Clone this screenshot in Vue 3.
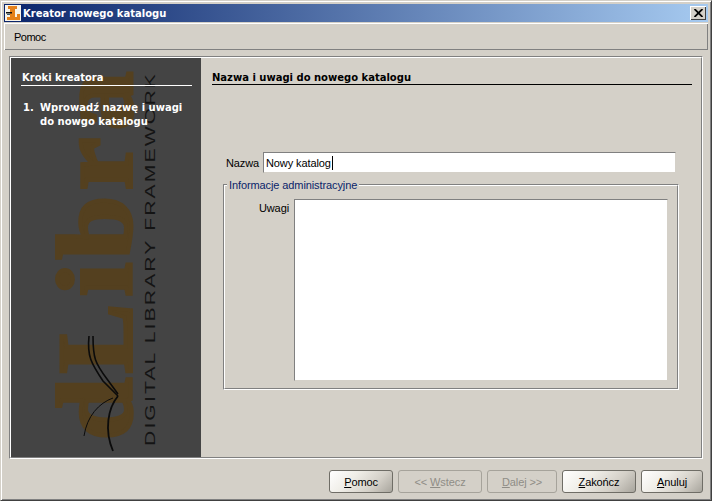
<script setup>
const buttons = [
  { pre: '', u: 'P', post: 'omoc', w: 64 },
  { pre: '<< ', u: 'W', post: 'stecz', w: 84, off: true },
  { pre: '', u: 'D', post: 'alej >>', w: 70, off: true },
  { pre: '', u: 'Z', post: 'akończ', w: 74 },
  { pre: '', u: 'A', post: 'nuluj', w: 62 },
]
const logoLetters = [
  { ch: 'd', y: 382, len: 62 },
  { ch: 'L', y: 315, len: 69 },
  { ch: 'i', y: 238, len: 33 },
  { ch: 'b', y: 201, len: 63 },
  { ch: 'r', y: 132, len: 52 },
  { ch: 'a', y: 72, len: 58 },
]
</script>

<template>
  <div class="win">
    <div class="title">
      <svg class="appicon" width="16" height="16" viewBox="0 0 16 16">
        <rect width="16" height="16" fill="#f8f4ea" />
        <path d="M3 1h9v3h-2v8h2V9h3v6H2v-3h3V4H3z" fill="#e5811a" />
        <path d="M1 7h6v1.5H1z" fill="#111" />
        <path d="M2 9h3v1H2z" fill="#3a5a70" />
      </svg>
      <span class="title-text">Kreator nowego katalogu</span>
      <span class="close">
        <svg width="9" height="8" viewBox="0 0 9 8"><path d="M0.5 0L8.5 8M8.5 0L0.5 8" stroke="#000" stroke-width="1.8" fill="none" /></svg>
      </span>
    </div>
    <div class="menubar"><span>Pomoc</span></div>
    <div class="etch-out">
      <div class="etch-in">
        <aside class="side">
          <svg class="logo" width="190" height="400" viewBox="0 0 190 400">
            <text
              v-for="l in logoLetters"
              :key="l.ch"
              :transform="`translate(120 ${l.y}) rotate(-90)`"
              class="logo-word"
              :textLength="l.len"
              lengthAdjust="spacingAndGlyphs"
            >{{ l.ch }}</text>
            <text transform="translate(144 388) rotate(-90)" class="logo-tag" textLength="374" lengthAdjust="spacingAndGlyphs">DIGITAL LIBRARY FRAMEWORK</text>
            <g fill="none" stroke="#0b0b0b">
              <path d="M78 278C76 298 80 305 92 323L107 338" stroke-width="1.6" />
              <path d="M82 278C82 300 84 305 96 321L107 336" stroke-width="1.6" />
              <path d="M107 338C97 350 93 372 102 393" stroke-width="1.8" />
              <path d="M102 340C88 345 76 358 73 378" stroke-width="1" />
            </g>
          </svg>
          <div class="side-head">Kroki kreatora</div>
          <div class="step">
            <span class="num">1.</span>
            <span>Wprowadź nazwę i uwagi<br />do nowgo katalogu</span>
          </div>
        </aside>
        <main class="content">
          <h2 class="heading">Nazwa i uwagi do nowego katalogu</h2>
          <div class="name-row">
            <span class="label">Nazwa</span>
            <div class="field name">Nowy katalog<i class="caret"></i></div>
          </div>
          <div class="group-out">
            <div class="group-in">
              <span class="legend">Informacje administracyjne</span>
              <div class="notes-row">
                <span class="label">Uwagi</span>
                <div class="field notes"></div>
              </div>
            </div>
          </div>
        </main>
      </div>
    </div>
    <div class="actions">
      <div v-for="b in buttons" :key="b.u" class="btn" :class="{ off: b.off }" :style="{ width: b.w + 'px' }">
        <span>{{ b.pre }}<u>{{ b.u }}</u>{{ b.post }}</span>
      </div>
    </div>
  </div>
</template>

<style>
html, body { margin: 0; padding: 0; background: #d4d0c8; }
</style>

<style scoped>
.win {
  box-sizing: border-box;
  width: 712px;
  height: 501px;
  overflow: hidden;
  background: #d4d0c8;
  border: 1px solid;
  border-color: #d4d0c8 #404040 #404040 #d4d0c8;
  box-shadow: inset 1px 1px 0 #fff, inset -1px -1px 0 #808080;
  padding: 3px;
  display: flex;
  flex-direction: column;
  font: 11px "Liberation Sans", Arial, sans-serif;
  letter-spacing: -0.1px;
  color: #000;
}
.title {
  height: 18px;
  flex: none;
  display: flex;
  align-items: center;
  gap: 2px;
  padding: 0 2px 0 1px;
  background: linear-gradient(90deg, #0a246a, #a6caf0);
}
.appicon { flex: none; }
.title-text {
  flex: 1;
  color: #fff;
  font: bold 10px "DejaVu Sans", sans-serif;
  letter-spacing: 0;
  white-space: nowrap;
}
.close {
  box-sizing: border-box;
  width: 16px;
  height: 14px;
  display: flex;
  align-items: center;
  justify-content: center;
  background: #d4d0c8;
  box-shadow: inset 1px 1px 0 #fff, inset -1px -1px 0 #404040;
}
.menubar {
  box-sizing: border-box;
  flex: none;
  height: 27px;
  margin-top: 1px;
  padding: 0 10px;
  display: flex;
  align-items: center;
  letter-spacing: -0.5px;
  box-shadow: inset 1px 1px 0 #fff, inset -1px -1px 0 #808080;
}
.etch-out {
  box-sizing: border-box;
  flex: none;
  height: 403px;
  margin: 6px 5px 0 5px;
  border: 1px solid;
  border-color: #808080 #fff #fff #808080;
}
.etch-in {
  box-sizing: border-box;
  height: 100%;
  border: 1px solid;
  border-color: #fff #808080 #808080 #fff;
  display: flex;
}
.side {
  position: relative;
  box-sizing: border-box;
  flex: none;
  width: 190px;
  background: #444444;
  color: #fff;
  padding: 13px 9px 0 10px;
  font: bold 10px "DejaVu Sans", sans-serif;
  letter-spacing: 0;
  overflow: hidden;
}
.logo { position: absolute; left: 0; top: 0; }
.logo-word {
  font: bold 106px "Liberation Serif", serif;
  fill: #54401f;
  stroke: #54401f;
  stroke-width: 4px;
}
.logo-tag {
  font: 15px "Liberation Sans", sans-serif;
  letter-spacing: 1.5px;
  fill: #141414;
}
.side-head, .step { position: relative; }
.side-head {
  height: 14px;
  line-height: 13px;
  padding-left: 1px;
  border-bottom: 1px solid #fff;
}
.step {
  display: flex;
  margin-top: 15px;
  padding-left: 2px;
  line-height: 14px;
}
.num { flex: none; width: 17px; }
.content {
  flex: 1;
  min-width: 0;
  display: flex;
  flex-direction: column;
  padding: 13px 9px 0 11px;
}
.heading {
  box-sizing: border-box;
  margin: 0;
  height: 14px;
  padding-left: 0;
  font: bold 10px/13px "DejaVu Sans", sans-serif;
  letter-spacing: 0;
  border-bottom: 1px solid #000;
}
.name-row {
  display: flex;
  align-items: center;
  gap: 5px;
  margin: 67px 16px 0 14px;
}
.label { flex: none; width: 32px; }
.field {
  box-sizing: border-box;
  background: #fff;
  border: 1px solid;
  border-color: #808080 #d4d0c8 #d4d0c8 #808080;
}
.name {
  flex: 1;
  height: 21px;
  padding-left: 2px;
  display: flex;
  align-items: center;
}
.caret {
  display: block;
  width: 1px;
  height: 14px;
  margin-left: 1px;
  background: #000;
}
.group-out {
  box-sizing: border-box;
  height: 206px;
  margin: 11px 13px 0 11px;
  border: 1px solid;
  border-color: #808080 #fff #fff #808080;
}
.group-in {
  position: relative;
  box-sizing: border-box;
  height: 100%;
  border: 1px solid;
  border-color: #fff #808080 #808080 #fff;
  padding: 13px 9px 0 0;
}
.legend {
  position: absolute;
  left: 2px;
  top: -7px;
  padding: 0 2px;
  background: #d4d0c8;
  color: #0a246a;
  line-height: 13px;
}
.notes-row {
  display: flex;
  gap: 5px;
}
.notes-row .label {
  width: 64px;
  text-align: right;
  padding-top: 3px;
}
.notes {
  flex: 1;
  height: 182px;
}
.actions {
  flex: 1;
  display: flex;
  justify-content: flex-end;
  gap: 5px;
  padding: 11px 5px 0 0;
}
.btn {
  box-sizing: border-box;
  height: 23px;
  display: flex;
  align-items: center;
  justify-content: center;
  border: 1px solid #6f6d66;
  border-radius: 3px;
  background: linear-gradient(135deg, #ffffff 0%, #f0eee8 35%, #d4d0c8 70%, #a8a59d 100%);
  white-space: nowrap;
}
.btn.off {
  background: #d4d0c8;
  border-color: #a6a39b;
  color: #8f8d86;
}
</style>
